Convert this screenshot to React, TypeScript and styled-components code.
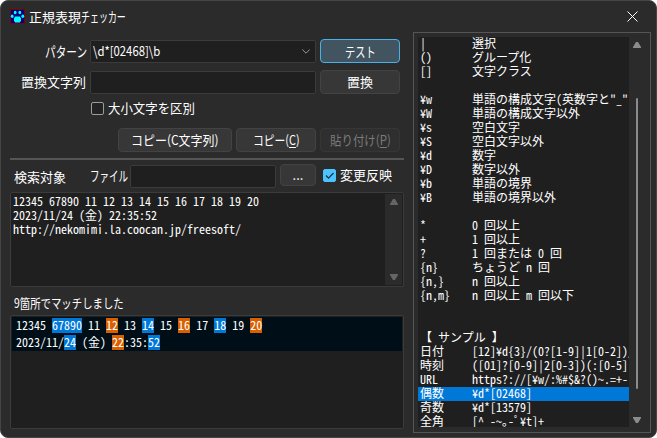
import React from "react";
import styled, { createGlobalStyle, css } from "styled-components";

const Global = createGlobalStyle`
  * { box-sizing: border-box; }
  body { margin: 0; background: #fff; overflow: hidden; }
`;

const ui = `"Noto Sans CJK JP", "Noto Sans", sans-serif`;

const Window = styled.div`
  width: 657px;
  height: 438px;
  display: flex;
  flex-direction: column;
  background: #2b2b2b;
  border: 1px solid #454545;
  border-radius: 8px;
  overflow: hidden;
  color: #fff;
  font: 13px/18px ${ui};
`;

const TitleBar = styled.header`
  height: 31px;
  flex: none;
  display: flex;
  align-items: center;
  padding: 0 18px 0 9px;
`;

const Title = styled.h1`
  flex: 1;
  margin: 0 0 0 4px;
  font-size: 13px;
  font-weight: 400;
`;

const CloseButton = styled.button`
  display: flex;
  padding: 0;
  border: 0;
  background: none;
`;

const Body = styled.main`
  display: grid;
  grid-template-columns: 394px 238px;
  column-gap: 9px;
  padding-left: 9px;
  height: 400px;
`;

const Left = styled.section`
  display: flex;
  flex-direction: column;
  padding-top: 7px;
`;

const Row = styled.div<{ $gap?: number; $left?: number; $top?: number; $h?: number }>`
  display: flex;
  align-items: center;
  flex: none;
  height: ${p => p.$h ?? 24}px;
  margin-top: ${p => p.$top ?? 0}px;
  padding-left: ${p => p.$left ?? 0}px;
  gap: ${p => p.$gap ?? 4}px;
`;

const FieldLabel = styled.label`
  width: 76px;
  display: flex;
  justify-content: flex-end;
  white-space: nowrap;
`;

const Narrow = styled.span<{ $w: number; $scale: number; $size?: number }>`
  display: inline-block;
  flex: none;
  width: ${p => p.$w}px;
  font-size: ${p => p.$size ?? 13}px;
  white-space: nowrap;
  transform: scaleX(${p => p.$scale});
  transform-origin: 0 50%;
`;

const TargetLabel = styled.span`
  width: 76px;
  margin-top: 3px;
`;

const Field = styled.div<{ $w: number; $drop?: number }>`
  width: ${p => p.$w}px;
  height: 23px;
  display: flex;
  align-items: center;
  justify-content: space-between;
  margin-top: ${p => p.$drop ?? 0}px;
  padding: 0 5px 0 2px;
  background: #1f1f1f;
  border: 1px solid #3b3b3b;
  border-radius: 2px;
`;

const Button = styled.button<{ $w: number; $h?: number; $tone?: "primary" | "disabled" }>`
  width: ${p => p.$w}px;
  height: ${p => p.$h ?? 24}px;
  display: flex;
  align-items: center;
  justify-content: center;
  flex: none;
  padding: 0 0 1px;
  color: #fff;
  background: #373737;
  border: 1px solid #434343;
  border-radius: 4px;
  font: 13px/18px ${ui};
  ${p => p.$tone === "primary" && css`background: #42545f; border-color: #47b1e8;`}
  ${p => p.$tone === "disabled" && css`background: #2f2f2f; border-color: #363636; color: #7b7b7b;`}
  u { text-underline-offset: 2px; }
`;

const Box = styled.span<{ $on?: boolean }>`
  width: 13px;
  height: 13px;
  display: flex;
  flex: none;
  border-radius: 2px;
  border: 1px solid ${p => (p.$on ? "#4cc2ff" : "#9c9c9c")};
  background: ${p => (p.$on ? "#4cc2ff" : "#232323")};
`;

const Separator = styled.hr`
  width: 394px;
  height: 2px;
  margin: 6px 0 0;
  border: 0;
  background: #555;
  flex: none;
`;

const mono = css`
  font: 12px/14px ${ui};
  font-feature-settings: "hwid";
  white-space: pre;
`;

const TextArea = styled.div`
  height: 95px;
  margin-top: 5px;
  flex: none;
  display: flex;
  justify-content: space-between;
  padding: 1px;
  background: #1f1f1f;
  border: 1px solid #3b3b3b;
  border-radius: 2px;
`;

const TextBody = styled.div`
  ${mono}
  padding: 0 0 0 1px;
`;

const ScrollTrack = styled.div<{ $w: number }>`
  width: ${p => p.$w}px;
  flex: none;
  display: flex;
  flex-direction: column;
  align-items: center;
  justify-content: space-between;
  padding: 5px 0;
  background: #2b2b2b;
`;

const Thumb = styled.i`
  width: 2px;
  height: 291px;
  margin: 48px 0 26px;
  background: #8b8b8b;
  border-radius: 1px;
`;

const Results = styled.div`
  height: 114px;
  flex: none;
  padding: 1px;
  background: #1f1f1f;
  border: 1px solid #3b3b3b;
  border-radius: 2px;
`;

const ResultLine = styled.div`
  ${mono}
  height: 17px;
  padding: 1px 0 0 4px;
  display: flex;
  background: #000f17;
`;

const Match = styled.mark<{ $alt: boolean }>`
  height: 15px;
  color: #fff;
  background: ${p => (p.$alt ? "#d96000" : "#0078d7")};
`;

const Reference = styled.aside`
  height: 401px;
  border: 1px solid #555;
  padding: 4px;
  display: flex;
`;

const List = styled.div`
  width: 211px;
  height: 390px;
  flex: none;
  overflow: hidden;
  background: #1f1f1f;
`;

const Entry = styled.div<{ $selected: boolean }>`
  ${mono}
  line-height: 12px;
  height: 14px;
  display: grid;
  grid-template-columns: 52px 157px;
  padding-left: 2px;
  background: ${p => (p.$selected ? "#0078d7" : "none")};
  span:last-child { overflow-x: clip; height: 14px; }
`;

const entries: [string, string][] = [
  ["|", "選択"], ["()", "グループ化"], ["[]", "文字クラス"], ["", ""],
  ["¥w", "単語の構成文字(英数字と\"_\""], ["¥W", "単語の構成文字以外"],
  ["¥s", "空白文字"], ["¥S", "空白文字以外"], ["¥d", "数字"], ["¥D", "数字以外"],
  ["¥b", "単語の境界"], ["¥B", "単語の境界以外"], ["", ""],
  ["*", "0 回以上"], ["+", "1 回以上"], ["?", "1 回または 0 回"],
  ["{n}", "ちょうど n 回"], ["{n,}", "n 回以上"], ["{n,m}", "n 回以上 m 回以下"],
  ["", ""], ["", ""], ["【 サンプル 】", ""],
  ["日付", "[12]¥d{3}/(0?[1-9]|1[0-2])/"], ["時刻", "([01]?[0-9]|2[0-3])(:[0-5]"],
  ["URL", "https?://[¥w/:%#$&?()~.=+-"], ["偶数", "¥d*[02468]"],
  ["奇数", "¥d*[13579]"], ["全角", "[^ -~｡-ﾟ¥t]+"],
];

const results = [
  "12345 [67890] 11 [12] 13 [14] 15 [16] 17 [18] 19 [20]",
  "2023/11/[24] (金) [22]:35:[52]",
];

let matchIndex = 0;
const resultParts = results.map(line =>
  line.split(/(\[\d+\])/).filter(Boolean).map(text =>
    text.startsWith("[")
      ? { text: text.slice(1, -1), match: matchIndex++ }
      : { text, match: -1 }
  )
);

const Paw = () => (
  <svg width="15" height="15" viewBox="0 0 15 15">
    <rect x=".5" y=".5" width="14" height="14" fill="#000080" stroke="#800000" />
    <g fill="#00ffff">
      <path d="M5 7.5h5v1h1v4h-1v1H5v-1H4v-4h1z" />
      <ellipse cx="5.2" cy="3.5" rx="1.4" ry="1.7" />
      <ellipse cx="9.8" cy="3.5" rx="1.4" ry="1.7" />
      <ellipse cx="2.2" cy="7.3" rx="1.4" ry="1.7" />
      <ellipse cx="12.8" cy="7.3" rx="1.4" ry="1.7" />
    </g>
  </svg>
);

const Arrow = ({ down, color }: { down?: boolean; color: string }) => (
  <svg width="8" height="6" viewBox="0 0 8 6">
    <path d={down ? "M0 0h8v1L5 6H3L0 1z" : "M0 6h8V5L5 0H3L0 5z"} fill={color} />
  </svg>
);

export default function App() {
  return (
    <Window>
      <Global />
      <TitleBar>
        <Paw />
        <Title>正規表現<Narrow $w={45} $size={14} $scale={0.64}>チェッカー</Narrow></Title>
        <CloseButton aria-label="閉じる">
          <svg width="11" height="11" viewBox="0 0 11 11" stroke="#fff" fill="none"><path d="M.5.5l10 10M10.5.5l-10 10" /></svg>
        </CloseButton>
      </TitleBar>
      <Body>
        <Left>
          <Row>
            <FieldLabel><Narrow $w={41} $size={14} $scale={0.76}>パターン</Narrow></FieldLabel>
            <Field $w={226}>
              <Narrow $w={68} $scale={0.87}>\d*[02468]\b</Narrow>
              <svg width="8" height="5" viewBox="0 0 8 5" stroke="#999" fill="none"><path d="M.3.5L4 4.2 7.7.5" /></svg>
            </Field>
            <Button $w={80} $tone="primary"><Narrow $w={31} $size={14} $scale={0.73}>テスト</Narrow></Button>
          </Row>
          <Row $top={7}>
            <FieldLabel>置換文字列</FieldLabel>
            <Field $w={226} />
            <Button $w={80}>置換</Button>
          </Row>
          <Row $left={81} $top={6} $h={16}>
            <Box />
            <Narrow $w={87} $scale={0.955}>大小文字を区別</Narrow>
          </Row>
          <Row $left={108} $top={12}>
            <Button $w={114}><Narrow $w={88} $scale={0.92}>コピー(C文字列)</Narrow></Button>
            <Button $w={80}><Narrow $w={47} $scale={0.83}>コピー(<u>C</u>)</Narrow></Button>
            <Button $w={80} $tone="disabled"><Narrow $w={60} $scale={0.88}>貼り付け(<u>P</u>)</Narrow></Button>
          </Row>
          <Separator />
          <Row $top={3} $left={4} $gap={0}>
            <TargetLabel>検索対象</TargetLabel>
            <Narrow $w={40} $size={14} $scale={0.68}>ファイル</Narrow>
            <Row $gap={4}>
              <Field $w={146} $drop={3} />
              <Button $w={36} $h={22}>...</Button>
            </Row>
            <Row $left={7} $gap={4}>
              <Box $on>
                <svg width="11" height="11" viewBox="0 0 11 11" stroke="#173442" strokeWidth="1.2" fill="none"><path d="M2 5.5l2.5 2.7L9.5 3" /></svg>
              </Box>
              変更反映
            </Row>
          </Row>
          <TextArea>
            <TextBody>{"12345 67890 11 12 13 14 15 16 17 18 19 20\n2023/11/24 (金) 22:35:52\nhttp://nekomimi.la.coocan.jp/freesoft/"}</TextBody>
            <ScrollTrack $w={17}><Arrow color="#656565" /><Arrow down color="#656565" /></ScrollTrack>
          </TextArea>
          <Row $left={4} $top={4} $h={24}>
            <Narrow $w={120} $scale={0.8}>9箇所でマッチしました</Narrow>
          </Row>
          <Results>
            {resultParts.map((parts, i) => (
              <ResultLine key={i}>
                {parts.map((p, j) => p.match < 0
                  ? <span key={j}>{p.text}</span>
                  : <Match key={j} $alt={p.match % 2 === 1}>{p.text}</Match>)}
              </ResultLine>
            ))}
          </Results>
        </Left>
        <Reference>
          <List>
            {entries.map(([name, text], i) => (
              <Entry key={i} $selected={i === 25}><span>{name}</span><span>{text}</span></Entry>
            ))}
          </List>
          <ScrollTrack $w={16}>
            <Arrow color="#8b8b8b" />
            <Thumb />
            <Arrow down color="#8b8b8b" />
          </ScrollTrack>
        </Reference>
      </Body>
    </Window>
  );
}
